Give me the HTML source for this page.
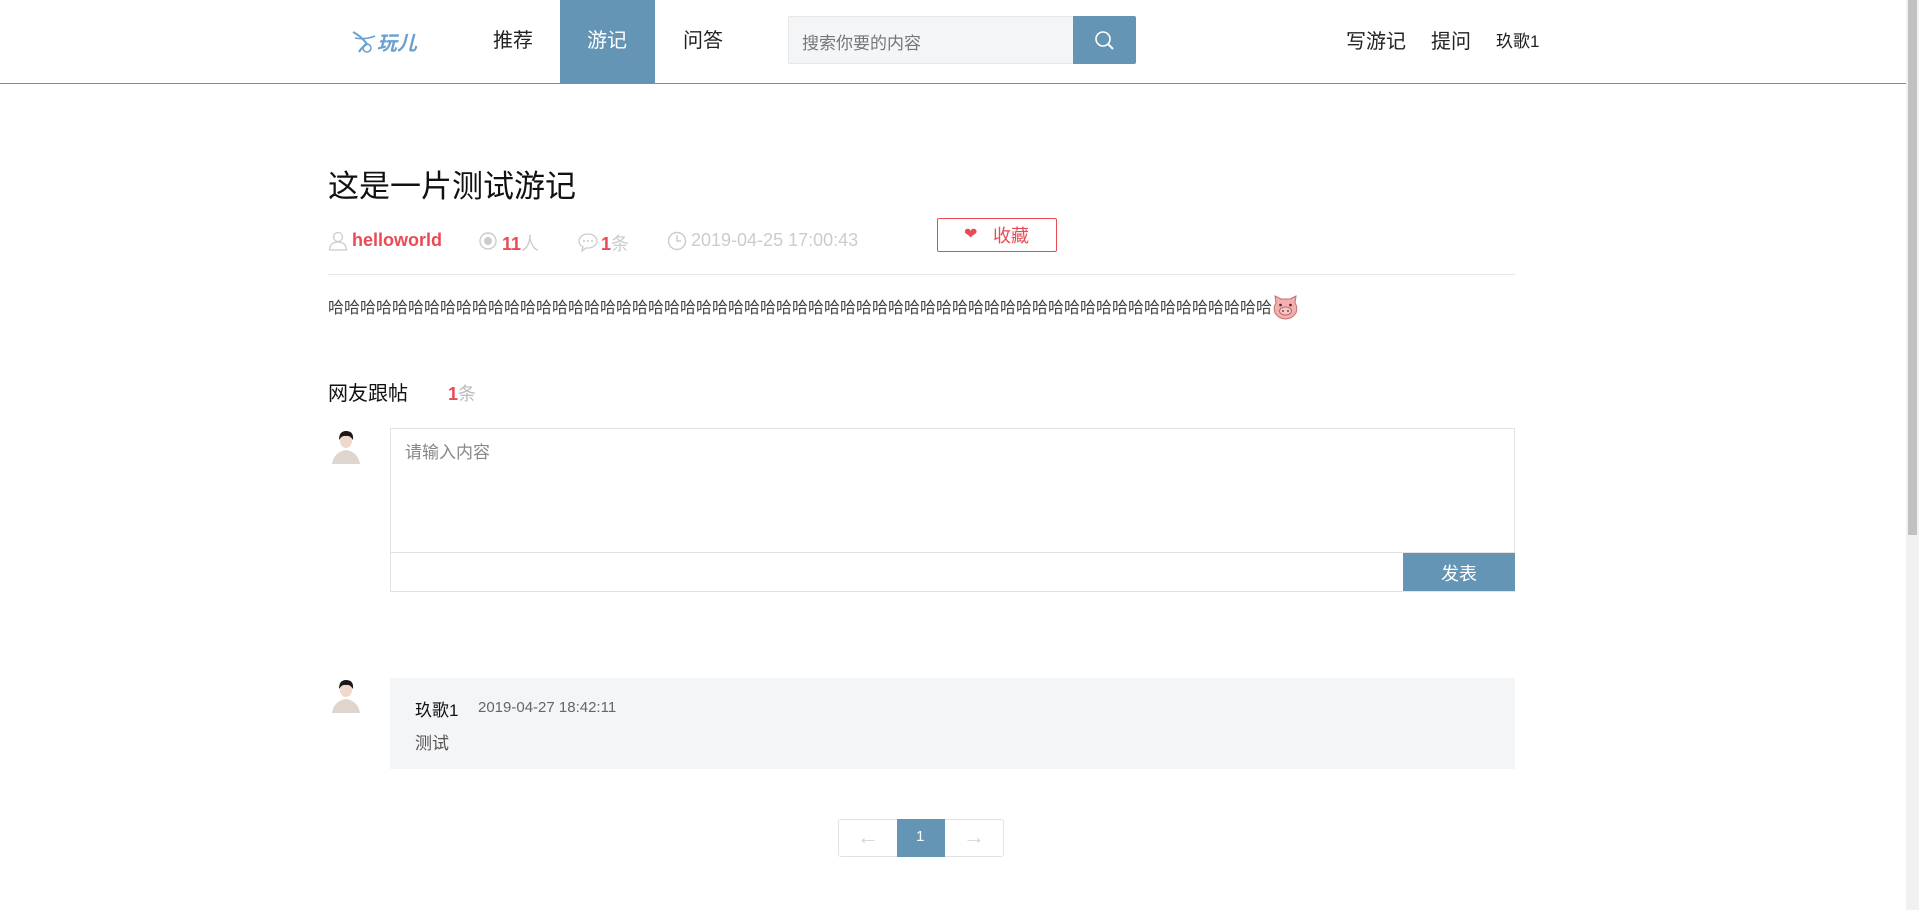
<!DOCTYPE html>
<html><head><meta charset="utf-8"><style>
*{margin:0;padding:0;box-sizing:border-box}
body{width:1919px;height:910px;background:#fff;font-family:"Liberation Sans","Noto Sans CJK SC",sans-serif;position:relative;overflow:hidden;color:#333}
.a{position:absolute;white-space:nowrap}
.hdr{position:absolute;left:0;top:0;width:1906px;height:84px;border-bottom:1px solid #6495b5}
.sb{position:absolute;right:0;top:0;width:13px;height:910px;background:#f1f1f1}
.sb div{position:absolute;left:2px;top:0;width:9px;height:535px;background:#c1c1c1}
</style></head><body>
<div class="hdr"></div>
<div class="sb"><div></div></div>
<svg class="a" style="left:351px;top:28px" width="80" height="30" viewBox="0 0 80 30">
<path d="M2 4 Q10 8 16 16 Q10 20 8 24" stroke="#6a9fd0" stroke-width="2" fill="none"/>
<path d="M4 10 Q14 12 24 8" stroke="#6a9fd0" stroke-width="1.5" fill="none"/>
<circle cx="16" cy="20" r="4" stroke="#6a9fd0" stroke-width="1.5" fill="none"/>
</svg>
<div class="a" style="left:377px;top:27px;font-size:20px;color:#6a9fd0;font-style:italic;font-weight:bold">玩儿</div>
<div class="a" style="left:493px;top:24px;font-size:20px;color:#222">推荐</div>
<div class="a" style="left:560px;top:0;width:95px;height:84px;background:#6495b5"></div>
<div class="a" style="left:587px;top:24px;font-size:20px;color:#fff">游记</div>
<div class="a" style="left:683px;top:24px;font-size:20px;color:#222">问答</div>
<div class="a" style="left:788px;top:16px;width:286px;height:48px;background:#f4f5f7;border:1px solid #e6e6e6;border-radius:2px"></div>
<div class="a" style="left:802px;top:29px;font-size:17px;color:#777">搜索你要的内容</div>
<div class="a" style="left:1073px;top:16px;width:63px;height:48px;background:#6495b5;border-radius:0 2px 2px 0"></div>
<svg class="a" style="left:1093px;top:29px" width="24" height="24" viewBox="0 0 24 24"><circle cx="10" cy="10" r="7" stroke="#fff" stroke-width="1.6" fill="none"/><path d="M15 15 L20 20" stroke="#fff" stroke-width="2"/></svg>
<div class="a" style="left:1346px;top:25px;font-size:20px;color:#222">写游记</div>
<div class="a" style="left:1431px;top:25px;font-size:20px;color:#222">提问</div>
<div class="a" style="left:1496px;top:27px;font-size:17px;color:#222">玖歌1</div>

<div class="a" style="left:328px;top:161px;font-size:31px;color:#111">这是一片测试游记</div>

<svg class="a" style="left:328px;top:231px" width="20" height="20" viewBox="0 0 20 20"><circle cx="10" cy="6" r="4.5" stroke="#ccc" fill="none" stroke-width="1.3"/><path d="M1.5 19 Q2 11 10 11 Q18 11 18.5 19 Z" stroke="#ccc" fill="none" stroke-width="1.3"/></svg>
<div class="a" style="left:352px;top:230px;font-size:18px;font-weight:bold;color:#e94a55">helloworld</div>
<svg class="a" style="left:478px;top:231px" width="20" height="20" viewBox="0 0 20 20"><circle cx="10" cy="10" r="8" stroke="#ccc" fill="none" stroke-width="1.4"/><circle cx="10" cy="10" r="4" fill="#ccc"/></svg>
<div class="a" style="left:502px;top:230px;font-size:18px;color:#ccc"><b style="color:#e94a55">11</b>人</div>
<svg class="a" style="left:577px;top:231px" width="22" height="22" viewBox="0 0 22 22"><path d="M11 3 C5 3 2 7 2 10 C2 13 4 15 6 16 L5 20 L9 17 C10 17 10 17 11 17 C17 17 20 13 20 10 C20 7 17 3 11 3Z" stroke="#ccc" fill="none" stroke-width="1.3"/><circle cx="7" cy="10" r="1" fill="#ccc"/><circle cx="11" cy="10" r="1" fill="#ccc"/><circle cx="15" cy="10" r="1" fill="#ccc"/></svg>
<div class="a" style="left:601px;top:230px;font-size:18px;color:#ccc"><b style="color:#e94a55">1</b>条</div>
<svg class="a" style="left:667px;top:231px" width="20" height="20" viewBox="0 0 20 20"><circle cx="10" cy="10" r="8.5" stroke="#ccc" fill="none" stroke-width="1.4"/><path d="M10 4 V10 H14" stroke="#ccc" fill="none" stroke-width="1.4"/></svg>
<div class="a" style="left:691px;top:230px;font-size:18px;color:#ccc">2019-04-25 17:00:43</div>
<div class="a" style="left:937px;top:218px;width:120px;height:34px;border:1px solid #e94a55;border-radius:2px"></div>
<div class="a" style="left:964px;top:224px;font-size:16px;color:#e94a55">❤</div>
<div class="a" style="left:993px;top:222px;font-size:18px;color:#e94a55">收藏</div>
<div class="a" style="left:328px;top:274px;width:1187px;height:1px;background:#e6e6e6"></div>
<div class="a" style="left:328px;top:294px;font-size:16px;color:#444;letter-spacing:0">哈哈哈哈哈哈哈哈哈哈哈哈哈哈哈哈哈哈哈哈哈哈哈哈哈哈哈哈哈哈哈哈哈哈哈哈哈哈哈哈哈哈哈哈哈哈哈哈哈哈哈哈哈哈哈哈哈哈哈</div>
<svg class="a" style="left:1272px;top:293px" width="27" height="27" viewBox="0 0 27 27"><path d="M3 3 L9 6 H18 L24 3 L23 10 Q26 14 24 20 Q20 26 13.5 26 Q7 26 3 20 Q1 14 4 10Z" fill="#f1b0b0" stroke="#c47070"/><ellipse cx="13.5" cy="18" rx="6" ry="4" fill="#f7c8c8" stroke="#b66"/><circle cx="11" cy="18" r="1" fill="#844"/><circle cx="16" cy="18" r="1" fill="#844"/><circle cx="8.5" cy="12" r="1.3" fill="#522"/><circle cx="18.5" cy="12" r="1.3" fill="#522"/></svg>

<div class="a" style="left:328px;top:377px;font-size:20px;color:#111">网友跟帖</div>
<div class="a" style="left:448px;top:380px;font-size:18px;color:#bbb"><b style="color:#e94a55">1</b>条</div>

<svg class="a" style="left:328px;top:428px" width="36" height="36" viewBox="0 0 36 36"><rect width="36" height="36" fill="#fff"/><path d="M4 36 Q6 24 18 22 Q30 24 32 36Z" fill="#ddd5ce"/><ellipse cx="18" cy="13" rx="6" ry="7" fill="#f0d9cc"/><path d="M11 12 Q11 3 18 3 Q26 3 25 12 Q22 7 18 8 Q14 7 11 12Z" fill="#1d1717"/></svg>
<div class="a" style="left:390px;top:428px;width:1125px;height:164px;border:1px solid #e3e3e3"></div>
<div class="a" style="left:390px;top:552px;width:1125px;height:1px;background:#e3e3e3"></div>
<div class="a" style="left:405px;top:438px;font-size:17px;color:#888">请输入内容</div>
<div class="a" style="left:1403px;top:553px;width:112px;height:38px;background:#6495b5"></div>
<div class="a" style="left:1441px;top:560px;font-size:18px;color:#fff">发表</div>

<svg class="a" style="left:328px;top:677px" width="36" height="36" viewBox="0 0 36 36"><rect width="36" height="36" fill="#fff"/><path d="M4 36 Q6 24 18 22 Q30 24 32 36Z" fill="#ddd5ce"/><ellipse cx="18" cy="13" rx="6" ry="7" fill="#f0d9cc"/><path d="M11 12 Q11 3 18 3 Q26 3 25 12 Q22 7 18 8 Q14 7 11 12Z" fill="#1d1717"/></svg>
<div class="a" style="left:390px;top:678px;width:1125px;height:91px;background:#f4f5f7"></div>
<div class="a" style="left:415px;top:696px;font-size:17px;color:#111">玖歌1</div>
<div class="a" style="left:478px;top:699px;font-size:15px;color:#666">2019-04-27 18:42:11</div>
<div class="a" style="left:415px;top:729px;font-size:17px;color:#555">测试</div>

<div class="a" style="left:838px;top:819px;width:166px;height:38px;border:1px solid #e3e3e3;border-radius:3px"></div>
<div class="a" style="left:897px;top:819px;width:48px;height:38px;background:#6495b5"></div>
<div class="a" style="left:916px;top:828px;font-size:15px;color:#fff">1</div>
<div class="a" style="left:857px;top:824px;font-size:22px;color:#d5d5d5">←</div>
<div class="a" style="left:963px;top:824px;font-size:22px;color:#d5d5d5">→</div>
</body></html>
